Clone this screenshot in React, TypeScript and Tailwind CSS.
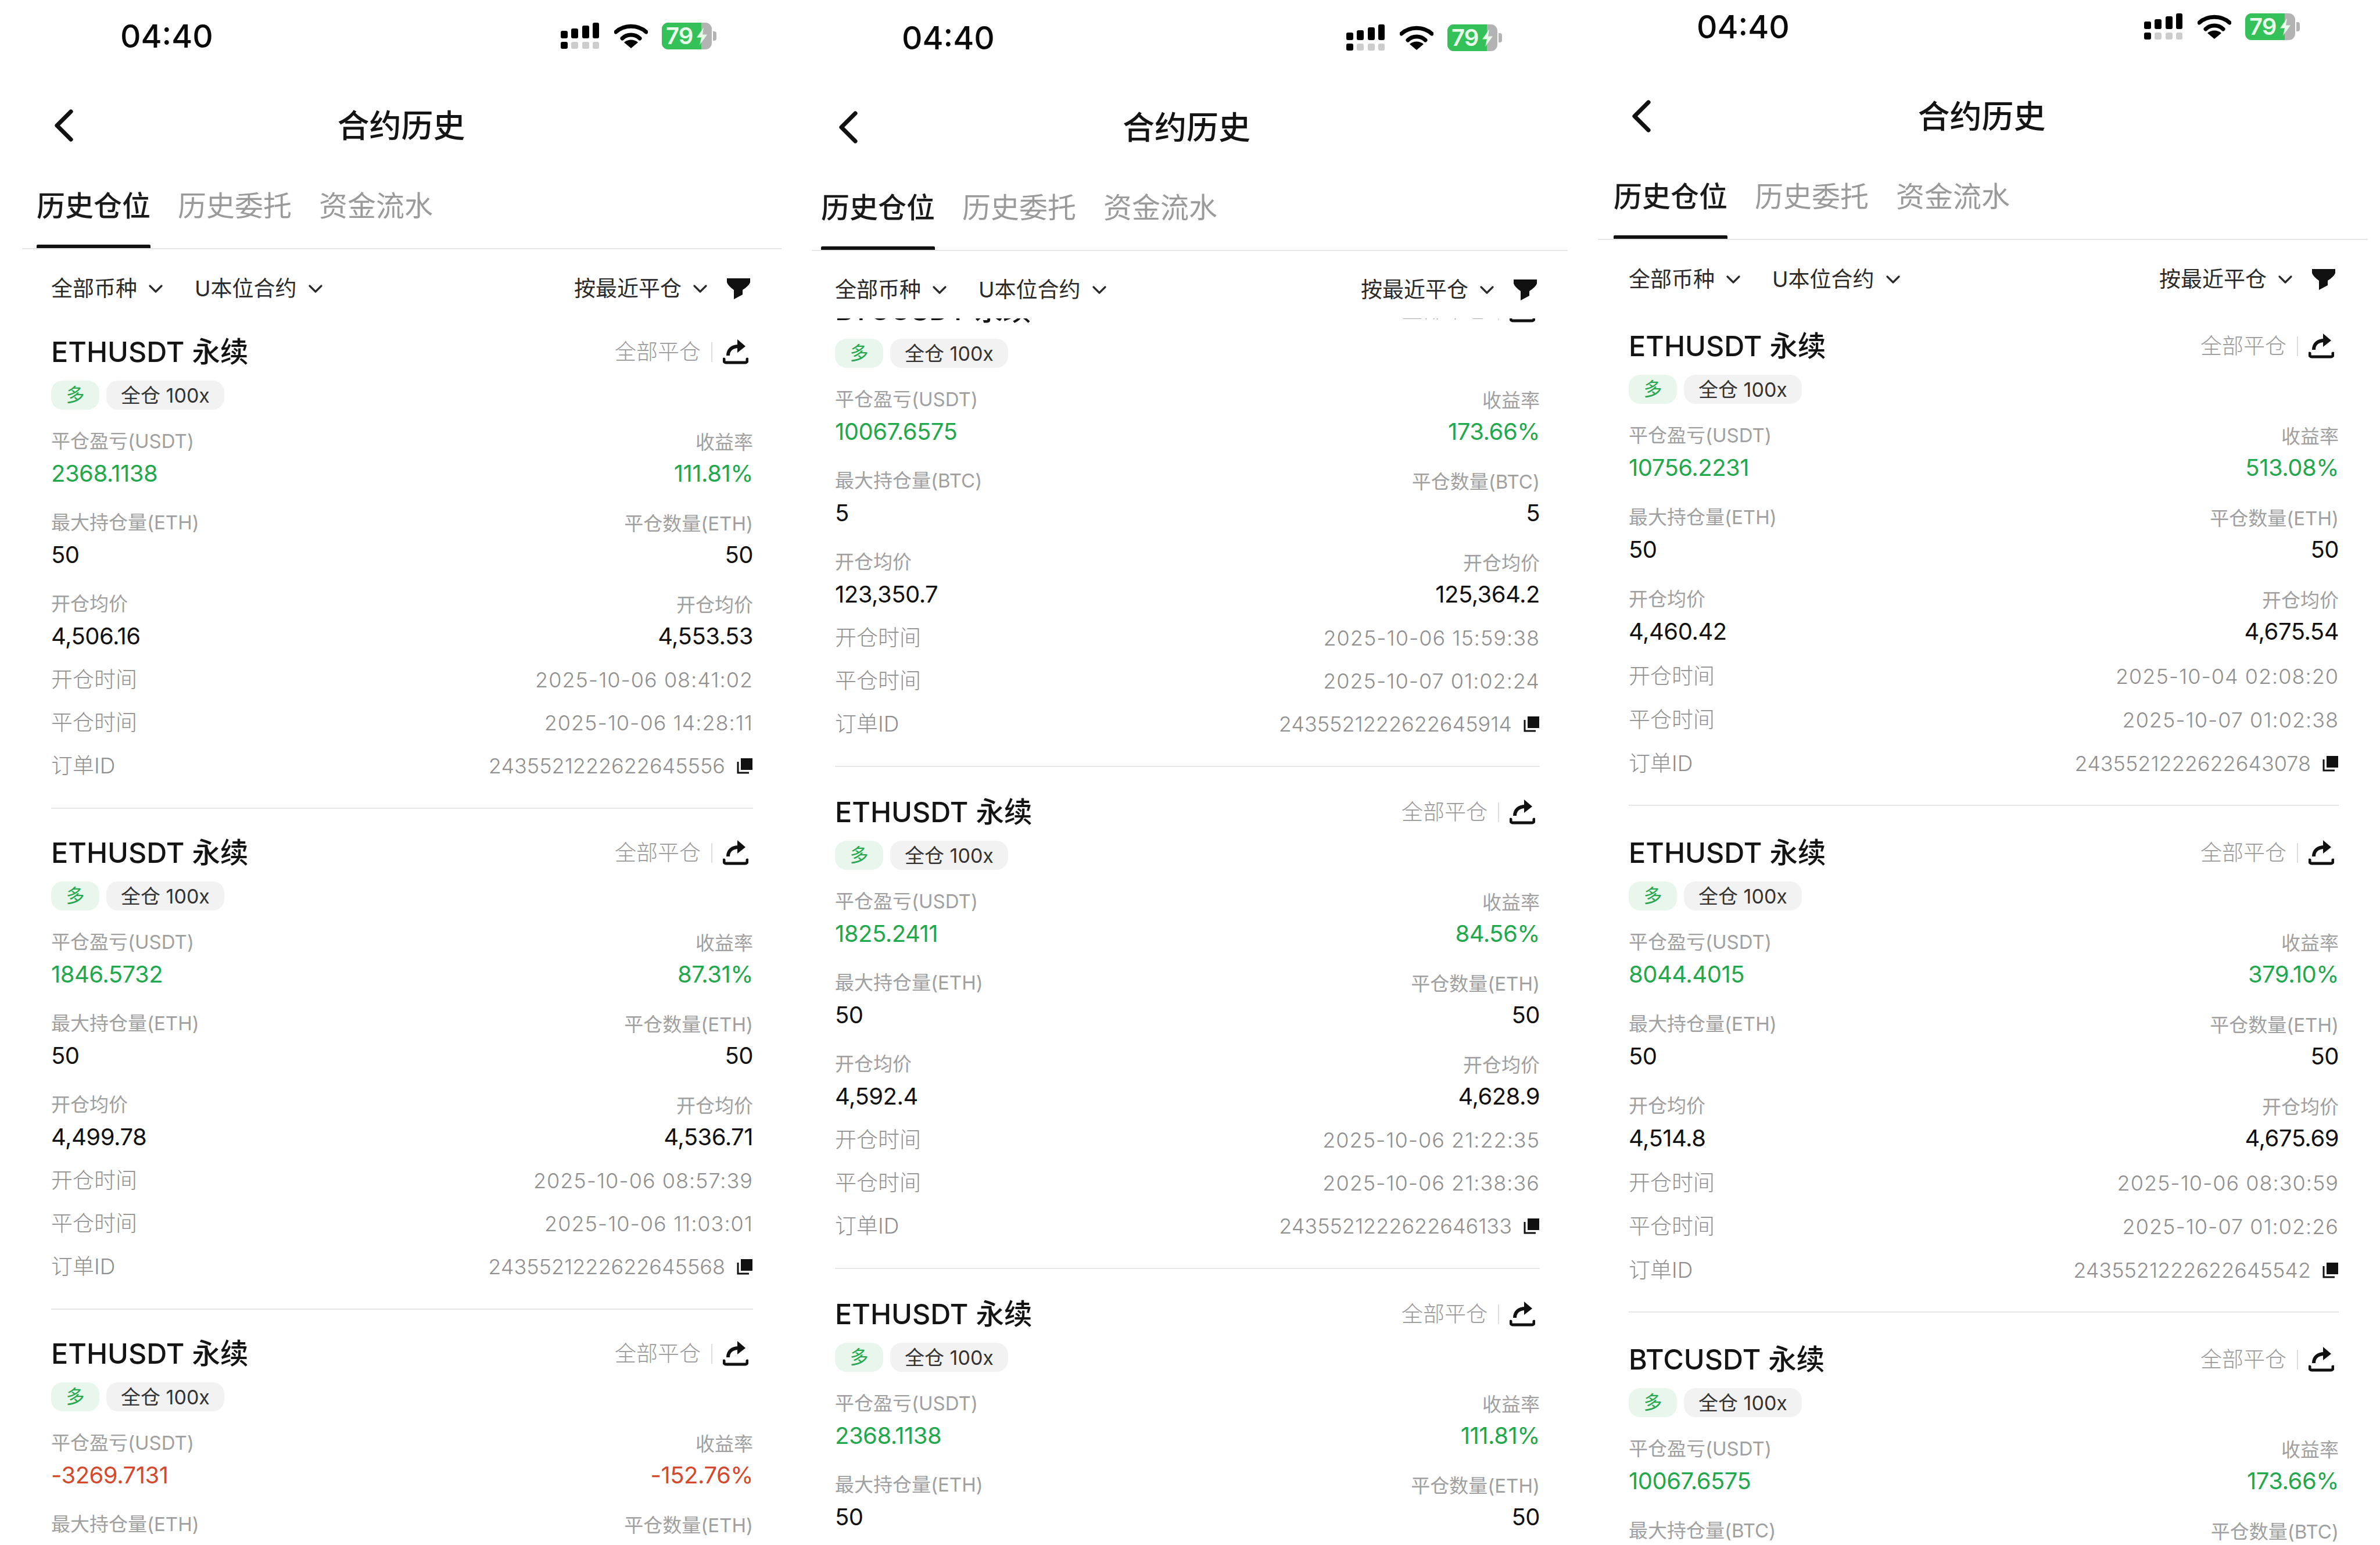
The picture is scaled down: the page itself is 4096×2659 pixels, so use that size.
import { ChevronDown, ChevronLeft } from "lucide-react";

const font = "font-['Inter','Noto_Sans_CJK_SC',sans-serif]";

type Card = {
    sym: string;
    coin: string;
    pnl: string;
    rate: string;
    qty: string;
    open: string;
    close: string;
    t1: string;
    t2: string;
    id: string;
};

type Layout = {
    width: string;
    pad: string;
    status: string;
    back: string;
    header: string;
    tabs: string;
    filter: string;
    listBox: string;
    list: string;
    divider: string;
    pairH: string;
    lastPairH: string;
    rowH: string;
};

const eth = { sym: "ETHUSDT", coin: "ETH", qty: "50" };
const btc = { sym: "BTCUSDT", coin: "BTC", qty: "5" };

const col1: Card[] = [
    { ...eth, pnl: "2368.1138", rate: "111.81%", open: "4,506.16", close: "4,553.53", t1: "2025-10-06 08:41:02", t2: "2025-10-06 14:28:11", id: "2435521222622645556" },
    { ...eth, pnl: "1846.5732", rate: "87.31%", open: "4,499.78", close: "4,536.71", t1: "2025-10-06 08:57:39", t2: "2025-10-06 11:03:01", id: "2435521222622645568" },
    { ...eth, pnl: "-3269.7131", rate: "-152.76%", open: "", close: "", t1: "", t2: "", id: "" },
];

const col2: Card[] = [
    { ...btc, pnl: "10067.6575", rate: "173.66%", open: "123,350.7", close: "125,364.2", t1: "2025-10-06 15:59:38", t2: "2025-10-07 01:02:24", id: "2435521222622645914" },
    { ...eth, pnl: "1825.2411", rate: "84.56%", open: "4,592.4", close: "4,628.9", t1: "2025-10-06 21:22:35", t2: "2025-10-06 21:38:36", id: "2435521222622646133" },
    { ...eth, pnl: "2368.1138", rate: "111.81%", open: "", close: "", t1: "", t2: "", id: "" },
];

const col3: Card[] = [
    { ...eth, pnl: "10756.2231", rate: "513.08%", open: "4,460.42", close: "4,675.54", t1: "2025-10-04 02:08:20", t2: "2025-10-07 01:02:38", id: "2435521222622643078" },
    { ...eth, pnl: "8044.4015", rate: "379.10%", open: "4,514.8", close: "4,675.69", t1: "2025-10-06 08:30:59", t2: "2025-10-07 01:02:26", id: "2435521222622645542" },
    { ...btc, pnl: "10067.6575", rate: "173.66%", open: "", close: "", t1: "", t2: "", id: "" },
];

const layout1: Layout = {
    width: "w-[1345px]",
    pad: "pt-[30px]",
    status: "pr-[112px]",
    back: "left-[62px]",
    header: "pl-[36px]",
    tabs: "ml-[38px] pl-[25px]",
    filter: "h-[136px] pt-[48px] pr-[54px] pl-[88px]",
    listBox: "pr-[49px] pl-[88px]",
    list: "mt-[16px]",
    divider: "mt-[35px] mb-[51px]",
    pairH: "h-[140px]",
    lastPairH: "h-[121px]",
    rowH: "h-[74px]",
};

const layout2: Layout = {
    width: "w-[1368px]",
    pad: "pt-[33px]",
    status: "pr-[128px]",
    back: "left-[67px]",
    header: "pl-[26px]",
    tabs: "ml-[52px] mr-[15px] pl-[16px]",
    filter: "h-[116px] pt-[47px] pr-[68px] pl-[92px]",
    listBox: "pr-[63px] pl-[92px]",
    list: "mt-[-39px]",
    divider: "mt-[35px] mb-[53px]",
    pairH: "h-[140px]",
    lastPairH: "h-[121px]",
    rowH: "h-[74px]",
};

const layout3: Layout = {
    width: "w-[1383px]",
    pad: "pt-[14px]",
    status: "pr-[138px]",
    back: "left-[64px]",
    header: "pl-[12px]",
    tabs: "ml-[37px] mr-[21px] pl-[27px]",
    filter: "h-[136px] pt-[48px] pr-[77px] pl-[90px]",
    listBox: "pr-[71px] pl-[90px]",
    list: "mt-[22px]",
    divider: "mt-[34px] mb-[56px]",
    pairH: "h-[141px]",
    lastPairH: "h-[122px]",
    rowH: "h-[75px]",
};

function StatusIcons() {
    return (
        <div className="flex items-center gap-[24px]">
            <svg width="68" height="46" viewBox="0 0 68 46">
                <rect x="0" y="14" width="12" height="13" rx="3" fill="#000" />
                <rect x="18" y="10" width="12" height="17" rx="3" fill="#000" />
                <rect x="37" y="5" width="12" height="22" rx="3" fill="#000" />
                <rect x="55" y="0" width="11" height="27" rx="3" fill="#000" />
                <rect x="0" y="33" width="12" height="12" rx="3" fill="#000" />
                <rect x="18" y="33" width="12" height="12" rx="3" fill="#ccc" />
                <rect x="37" y="33" width="12" height="12" rx="3" fill="#ccc" />
                <rect x="55" y="33" width="11" height="12" rx="3" fill="#ccc" />
            </svg>
            <svg width="58" height="44" viewBox="0 0 58 44" fill="none">
                <path d="M3 15 C17 2 41 2 55 15" stroke="#000" strokeWidth="7" strokeLinecap="round" />
                <path d="M14 26 C22 18 36 18 44 26" stroke="#000" strokeWidth="7" strokeLinecap="round" />
                <path d="M29 43 L17 33 C23 27 35 27 41 33 Z" fill="#000" />
            </svg>
            <div className="flex items-center">
                <div className="relative flex h-[46px] w-[86px] items-center overflow-hidden rounded-[11px] bg-[#b3b3b3]">
                    <div className="flex h-full w-[68px] items-center bg-[#34c159] pl-[7px] text-[40px] leading-none font-semibold tracking-[-1px] text-[#e9fbe9]">
                        79
                    </div>
                    <svg className="absolute top-[8px] left-[59px]" width="20" height="31" viewBox="0 0 20 30">
                        <path d="M13 0 L1 17 H9 L6 30 L19 12 H11 Z" fill="#e9fbe9" />
                    </svg>
                </div>
                <div className="ml-[2px] h-[16px] w-[6px] rounded-r-[4px] bg-[#b3b3b3]" />
            </div>
        </div>
    );
}

function ShareIcon() {
    return (
        <svg width="44" height="44" viewBox="0 0 44 44" fill="none">
            <path d="M25 0 L39 12 L25 23 Z" fill="#111" />
            <path d="M9 28 C9 18 16 12 27 12" stroke="#111" strokeWidth="6" />
            <path d="M2 34 V37 C2 39 4 40 6 40 H38 C40 40 42 39 42 37 V34" stroke="#111" strokeWidth="5" strokeLinecap="round" />
        </svg>
    );
}

function FilterIcon() {
    return (
        <svg className="ml-[26px]" width="40" height="36" viewBox="0 0 40 36">
            <path d="M0 0 H40 V7 Q38 13 27 20 V28 L12 36 V20 Q2 13 0 7 Z" fill="#111" />
        </svg>
    );
}

function CopyIcon() {
    return (
        <svg width="28" height="28" viewBox="0 0 28 28">
            <rect x="7" y="1" width="20" height="20" fill="#111" />
            <path d="M2 7 V26 H21" fill="none" stroke="#111" strokeWidth="3" />
        </svg>
    );
}

function Pair({ h, label, rightLabel, left, right, color }: { h: string; label: string; rightLabel: string; left: string; right: string; color: string }) {
    return (
        <div className={`flex justify-between ${h}`}>
            <div>
                <div className="h-[55px] text-[33px] leading-[55px] text-[#a0a0a0]">{label}</div>
                <div className={`text-[40px] leading-[55px] tracking-[-0.5px] ${color}`}>{left}</div>
            </div>
            <div className="pt-[2px] text-right">
                <div className="h-[53px] text-[33px] leading-[55px] text-[#a0a0a0]">{rightLabel}</div>
                <div className={`text-[40px] leading-[55px] tracking-[-0.5px] ${color}`}>{right}</div>
            </div>
        </div>
    );
}

function Row({ h, label, value, copy }: { h: string; label: string; value: string; copy?: boolean }) {
    return (
        <div className={`flex items-center justify-between text-[36px] font-light text-[#8f8f8f] ${h}`}>
            <span className="text-[37px]">{label}</span>
            {copy ? (
                <span className="flex items-center gap-[20px]">
                    {value}
                    <CopyIcon />
                </span>
            ) : (
                <span className="tracking-[1px]">{value}</span>
            )}
        </div>
    );
}

function PositionCard({ card, l }: { card: Card; l: Layout }) {
    const pnlColor = card.pnl.startsWith("-") ? "text-[#d4492e]" : "text-[#1fa84c]";
    return (
        <div>
            <div className="flex h-[50px] items-center justify-between">
                <div className="text-[48.5px] leading-none font-medium whitespace-nowrap text-[#141414]">
                    {card.sym} 永续
                </div>
                <div className="flex items-center text-[37px] font-light text-[#999]">
                    全部平仓
                    <span className="mx-[18px] h-[34px] w-[2px] bg-[#ddd]" />
                    <span className="mr-[8px]">
                        <ShareIcon />
                    </span>
                </div>
            </div>
            <div className="mt-[24px] mb-[27px] flex gap-[12px]">
                <span className="flex h-[50px] w-[83px] items-center justify-center rounded-[20px] bg-[#e8f6ec] text-[32px] text-[#27a84f]">
                    多
                </span>
                <span className="flex h-[50px] w-[203px] items-center justify-center rounded-[20px] bg-[#f2f2f2] text-[34px] text-[#333]">
                    全仓 100x
                </span>
            </div>
            <Pair h={l.pairH} label="平仓盈亏(USDT)" rightLabel="收益率" left={card.pnl} right={card.rate} color={pnlColor} />
            <Pair h={l.pairH} label={`最大持仓量(${card.coin})`} rightLabel={`平仓数量(${card.coin})`} left={card.qty} right={card.qty} color="text-[#111]" />
            {card.id && (
                <>
                    <Pair h={l.lastPairH} label="开仓均价" rightLabel="开仓均价" left={card.open} right={card.close} color="text-[#111]" />
                    <Row h={l.rowH} label="开仓时间" value={card.t1} />
                    <Row h={l.rowH} label="平仓时间" value={card.t2} />
                    <Row h={l.rowH} label="订单ID" value={card.id} copy />
                    <div className={`h-[2px] bg-[#e6e6e6] ${l.divider}`} />
                </>
            )}
        </div>
    );
}

function Phone({ cards, l }: { cards: Card[]; l: Layout }) {
    return (
        <div className={`flex h-[2659px] flex-col overflow-hidden ${l.width}`}>
            <div className={`shrink-0 ${l.pad}`}>
                <div className={`flex h-[64px] items-center justify-between pl-[207px] ${l.status}`}>
                    <span className="text-[55px] leading-none font-medium text-[#0a0a0a]">04:40</span>
                    <StatusIcons />
                </div>
                <div className={`relative mt-[90px] flex h-[64px] items-center justify-center ${l.header}`}>
                    <ChevronLeft className={`absolute ${l.back}`} size={96} strokeWidth={1.8} color="#111" />
                    <span className="text-[55px] leading-none font-medium text-[#141414]">合约历史</span>
                </div>
                <div className={`mt-[79px] flex h-[102px] gap-[47px] border-b-2 border-[#e6e6e6] text-[49px] leading-[56px] text-[#9a9a9a] ${l.tabs}`}>
                    <div className="relative h-[100px] font-medium text-[#1a1a1a]">
                        历史仓位
                        <div className="absolute right-0 bottom-0 left-0 h-[6px] rounded-t-[2px] bg-[#111]" />
                    </div>
                    <div>历史委托</div>
                    <div>资金流水</div>
                </div>
                <div className={l.filter}>
                    <div className="flex h-[40px] items-center text-[37px] text-[#2a2a2a]">
                        <span>全部币种</span>
                        <ChevronDown className="ml-[12px]" size={40} strokeWidth={2} />
                        <span className="ml-[47px]">U本位合约</span>
                        <ChevronDown className="ml-[12px]" size={40} strokeWidth={2} />
                        <span className="ml-auto">按最近平仓</span>
                        <ChevronDown className="ml-[12px]" size={40} strokeWidth={2} />
                        <FilterIcon />
                    </div>
                </div>
            </div>
            <div className={`min-h-0 flex-1 overflow-hidden ${l.listBox}`}>
                <div className={l.list}>
                    {cards.map((c, i) => (
                        <PositionCard key={i} card={c} l={l} />
                    ))}
                </div>
            </div>
        </div>
    );
}

export default function App() {
    return (
        <div className={`flex h-[2659px] w-[4096px] overflow-hidden bg-white ${font}`}>
            <Phone cards={col1} l={layout1} />
            <Phone cards={col2} l={layout2} />
            <Phone cards={col3} l={layout3} />
        </div>
    );
}
